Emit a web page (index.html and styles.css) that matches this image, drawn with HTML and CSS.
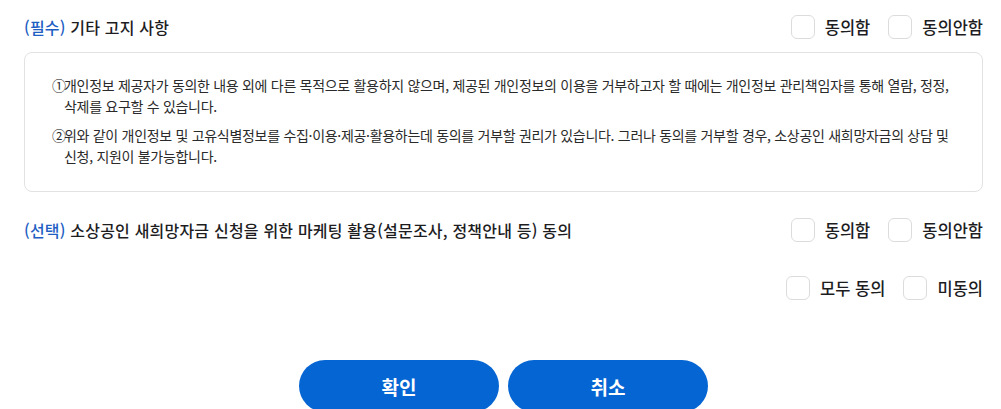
FILE: index.html
```html
<!DOCTYPE html>
<html lang="ko">
<head>
  <meta charset="UTF-8" />
  <meta name="viewport" content="width=device-width, initial-scale=1.0"/>
  <title>동의</title>
  <link rel="stylesheet" href="styles.css">
</head>
<body>
  <div class="wrap">
    <div class="agree-row">
      <h3 class="agree-title"><span class="tag">(필수)</span> 기타 고지 사항</h3>
      <div class="choices">
        <label class="choice"><span class="box"></span>동의함</label>
        <label class="choice"><span class="box"></span>동의안함</label>
      </div>
    </div>

    <div class="notice">
      <p class="item"><span class="num">①</span><span class="txt">개인정보 제공자가 동의한 내용 외에 다른 목적으로 활용하지 않으며, 제공된 개인정보의 이용을 거부하고자 할 때에는 개인정보 관리책임자를 통해 열람, 정정, 삭제를 요구할 수 있습니다.</span></p>
      <p class="item"><span class="num">②</span><span class="txt">위와 같이 개인정보 및 고유식별정보를 수집·이용·제공·활용하는데 동의를 거부할 권리가 있습니다. 그러나 동의를 거부할 경우, 소상공인 새희망자금의 상담 및 신청, 지원이 불가능합니다.</span></p>
    </div>

    <div class="agree-row second">
      <h3 class="agree-title"><span class="tag">(선택)</span> 소상공인 새희망자금 신청을 위한 마케팅 활용(설문조사, 정책안내 등) 동의</h3>
      <div class="choices">
        <label class="choice"><span class="box"></span>동의함</label>
        <label class="choice"><span class="box"></span>동의안함</label>
      </div>
    </div>

    <div class="choices all">
      <label class="choice"><span class="box"></span>모두 동의</label>
      <label class="choice"><span class="box"></span>미동의</label>
    </div>

    <div class="btns">
      <button class="btn">확인</button>
      <button class="btn">취소</button>
    </div>
  </div>
</body>
</html>
```

FILE: styles.css
```css
body {
  margin: 0;
  font-family: 'Noto Sans CJK KR', 'Noto Sans', sans-serif;
  color: #1d1d1f;
  background-color: #ffffff;
}

.wrap {
  padding: 15px 18px 0 24px;
}

.agree-row {
  display: flex;
  justify-content: space-between;
  align-items: center;
  height: 24px;
}

.agree-row.second {
  margin-top: 26px;
}

.agree-title {
  margin: 0;
  font-size: 16px;
  font-weight: 500;
  letter-spacing: 0.2px;
  color: #1d1d1f;
}

.tag {
  color: #1f5fc4;
}

.choices {
  display: flex;
  gap: 18px;
}

.choices.all {
  justify-content: flex-end;
  margin-top: 34px;
}

.choice {
  display: flex;
  align-items: center;
  gap: 10px;
  font-size: 16.5px;
  font-weight: 500;
  line-height: 24px;
}

.box {
  width: 22px;
  height: 22px;
  border: 1px solid #dcdcdc;
  border-radius: 6px;
  background-color: #ffffff;
}

.notice {
  margin-top: 13px;
  height: 140px;
  box-sizing: border-box;
  border: 1px solid #e2e2e2;
  border-radius: 8px;
  padding: 22px 28px 0 27px;
}

.item {
  display: flex;
  margin: 0 0 8px 0;
  font-size: 14px;
  line-height: 21px;
  letter-spacing: -0.3px;
  word-break: keep-all;
  color: #2a2a2a;
}

.num {
  flex: none;
  width: 12px;
}

.btns {
  display: flex;
  justify-content: center;
  gap: 9px;
  margin-top: 60px;
}

.btn {
  width: 200px;
  height: 52px;
  border: none;
  border-radius: 26px;
  background-color: #0566d3;
  color: #ffffff;
  font-family: 'Noto Sans CJK KR', 'Noto Sans', sans-serif;
  font-size: 19px;
  font-weight: 700;
}
```
